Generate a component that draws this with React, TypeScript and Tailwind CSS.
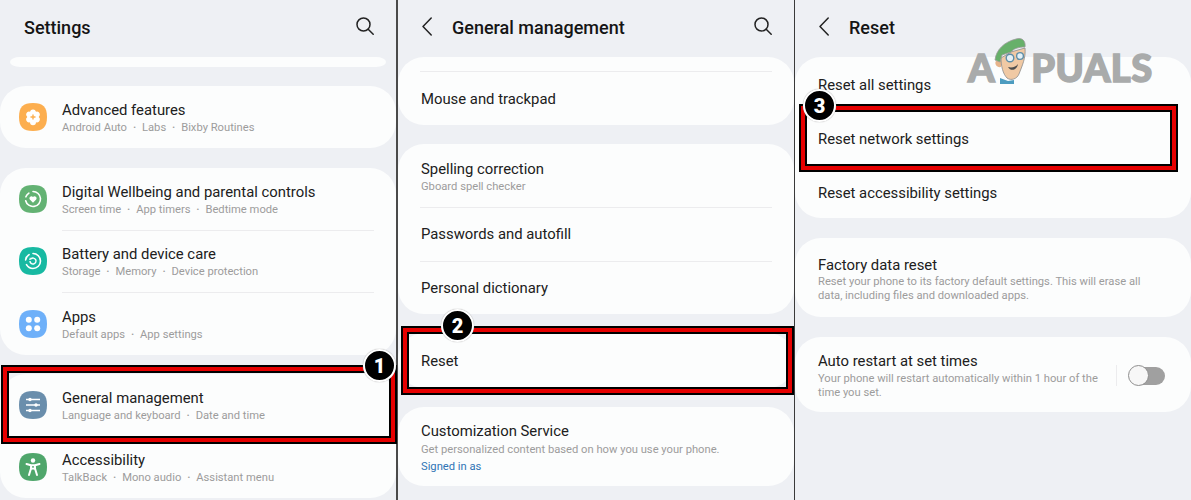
import React from "react";

const Squircle = ({ color, children }: { color: string; children?: React.ReactNode }) => (
  <svg width="28" height="28" viewBox="0 0 28 28" className="shrink-0">
    <path d="M14 0C24 0 28 4 28 14S24 28 14 28 0 24 0 14 4 0 14 0Z" fill={color} />
    {children}
  </svg>
);

const icons: Record<string, React.ReactNode> = {
  advanced: (
    <Squircle color="#fcae4f">
      <path d="M14 6.500a3 3 0 0 1 3 2.200 3 3 0 0 1 3.600 1.500 3 3 0 0 1-.9 3.800 3 3 0 0 1 .9 3.800A3 3 0 0 1 17 19.300a3 3 0 0 1-6 0 3 3 0 0 1-3.600-1.500 3 3 0 0 1 .9-3.800 3 3 0 0 1-.9-3.800A3 3 0 0 1 11 8.700a3 3 0 0 1 3-2.200Z" fill="#fff" />
      <path d="M14 11.500v5M11.500 14h5" stroke="#fcae4f" strokeWidth="1.400" />
    </Squircle>
  ),
  wellbeing: (
    <Squircle color="#63b273">
      <path d="M14 6.500a7.500 7.500 0 1 1-7.300 9.200" fill="none" stroke="#fff" strokeWidth="1.600" strokeLinecap="round" />
      <path d="M6.900 11.800a7.500 7.500 0 0 1 3-3.700" fill="none" stroke="#fff" strokeWidth="1.600" strokeLinecap="round" />
      <path d="M14 17.800l-3.200-3.200a2.100 2.100 0 0 1 3.200-2.700 2.100 2.100 0 0 1 3.200 2.700Z" fill="#fff" />
    </Squircle>
  ),
  battery: (
    <Squircle color="#17b9a2">
      <path d="M14 6.500a7.500 7.500 0 0 1 0 15 7.500 7.500 0 0 1-6.500-3.800" fill="none" stroke="#fff" strokeWidth="1.600" strokeLinecap="round" />
      <path d="M6.600 13a7.500 7.500 0 0 1 3.500-5.400" fill="none" stroke="#fff" strokeWidth="1.600" strokeLinecap="round" />
      <path d="M11 14a3 3 0 1 0 1-2.200" fill="none" stroke="#fff" strokeWidth="1.400" />
      <path d="M11 10.200l1.500 2.200-2.400.6Z" fill="#fff" />
    </Squircle>
  ),
  apps: (
    <Squircle color="#6eb0f9">
      <circle cx="9.800" cy="9.800" r="3" fill="#fff" />
      <circle cx="18.200" cy="9.800" r="3" fill="#fff" />
      <circle cx="9.800" cy="18.200" r="3" fill="#fff" />
      <circle cx="18.200" cy="18.200" r="3" fill="#fff" />
    </Squircle>
  ),
  general: (
    <Squircle color="#6a8eac">
      <path d="M7 8.500h14M7 14h14M7 19.500h14" stroke="#fff" strokeWidth="1.300" />
      <circle cx="11" cy="8.500" r="1.700" fill="#fff" />
      <circle cx="17" cy="14" r="1.700" fill="#fff" />
      <circle cx="11" cy="19.500" r="1.700" fill="#fff" />
    </Squircle>
  ),
  accessibility: (
    <Squircle color="#4fa66b">
      <circle cx="14" cy="7.500" r="2.200" fill="#fff" />
      <path d="M7.500 11l4.500 1.300v3.200L10 22M20.500 11L16 12.300v3.200L18 22M12 12.300h4M12 16l2-.6 2 .6" fill="none" stroke="#fff" strokeWidth="2" strokeLinecap="round" strokeLinejoin="round" />
    </Squircle>
  ),
};

const SearchIcon = () => (
  <svg width="18" height="18" viewBox="0 0 18 18" fill="none" stroke="#222" strokeWidth="1.500" strokeLinecap="round">
    <circle cx="7.500" cy="7.500" r="6.500" />
    <path d="M12.200 12.200L17.200 17.200" />
  </svg>
);

const BackIcon = () => (
  <svg width="10" height="19" viewBox="0 0 10 19" fill="none" stroke="#222" strokeWidth="1.500" strokeLinecap="round" strokeLinejoin="round">
    <path d="M9.200 1L1 9.500 9.200 18" />
  </svg>
);

const Sub = ({ parts }: { parts: string[] }) => (
  <div className="flex items-center text-[11.200px] leading-[15px] text-[#9c9c9c] whitespace-nowrap">
    {parts.map((p, i) => (
      <React.Fragment key={p}>
        {i > 0 && <span className="w-[15px] text-center text-[8px]">•</span>}
        <span>{p}</span>
      </React.Fragment>
    ))}
  </div>
);

const Title = ({ children }: { children: React.ReactNode }) => (
  <div className="text-[14.850px] leading-[19px] text-[#202020] whitespace-nowrap">{children}</div>
);

const IconRow = ({ icon, title, sub, h }: { icon: string; title: string; sub: string[]; h: string }) => (
  <div className={`flex items-center pl-[19px] gap-[15px] ${h}`}>
    {icons[icon]}
    <div className="pt-[2px]">
      <Title>{title}</Title>
      <Sub parts={sub} />
    </div>
  </div>
);

const Divider = ({ left }: { left: string }) => <div className={`h-px bg-[#ececee] mr-[22px] ${left}`} />;

const Header = ({ title, back, search }: { title: string; back?: boolean; search?: boolean }) => (
  <div className="h-[57px] shrink-0 flex items-center">
    {back ? (
      <div className="ml-[24px] w-[30px] flex mb-[5px]"><BackIcon /></div>
    ) : (
      <div className="w-[24px]" />
    )}
    <div className="flex-1 text-[18px] font-medium text-[#151515] pb-[3px]">{title}</div>
    {search && <div className="mr-[22px] mb-[6px]"><SearchIcon /></div>}
  </div>
);

const Box = ({ className }: { className: string }) => (
  <div className={`absolute border-2 border-black ${className}`}>
    <div className="h-full border-4 border-[#e60000]">
      <div className="h-full border-2 border-black" />
    </div>
  </div>
);

const Badge = ({ n, className }: { n: string; className: string }) => (
  <div className={`absolute w-[33px] h-[33px] rounded-full bg-black border-2 border-white shadow-[0_0_1px_#888] flex items-center justify-center text-white font-black text-[20px] leading-none ${className}`}>
    {n}
  </div>
);

const Card = ({ className, children }: { className?: string; children?: React.ReactNode }) => (
  <div className={`bg-[#fcfdfd] rounded-[26px] ${className ?? ""}`}>{children}</div>
);

const Logo = () => (
  <div className="absolute left-[968px] top-[38px] flex items-end h-[46px] text-[#a9abab] font-black text-[38px] leading-[38px] [font-family:Lato,sans-serif] tracking-[0.500px] [-webkit-text-stroke:1.500px_#a9abab]">
    <span className="mb-[-2px]">A</span>
    <svg width="34" height="46" viewBox="0 0 34 46" className="ml-[-1px]">
      <path d="M2 23c-2 3 1 7 5 6l1-7Z" fill="#e6b48b" />
      <path d="M7 20L17 14 31 10c1 10-3 18-6 26-2 5-8 7-12 4C9 36 7 28 7 20Z" fill="#f0c9a4" stroke="#8b8b8b" strokeWidth=".8" />
      <path d="M1 22C2 12 10 4 22 1c6-2 10 2 9 8-7 0-12 2-14 5l-9 3-2 7Z" fill="#67b06a" stroke="#9a9a9a" strokeWidth=".8" />
      <circle cx="16" cy="20" r="3.800" fill="#e4f1f7" stroke="#5d8ea8" strokeWidth="1.400" />
      <circle cx="26" cy="18" r="3.400" fill="#e4f1f7" stroke="#5d8ea8" strokeWidth="1.400" />
      <path d="M14 29c4 1 8 0 10-3-1 6-7 8-10 3Z" fill="#4d4d4d" />
      <path d="M6 40l8 3 6-1v4H6Z" fill="#4d9cc0" />
    </svg>
    <span className="mb-[-2px] ml-[3px]">PUALS</span>
  </div>
);

export default function App() {
  return (
    <div className="relative w-[1191px] h-[500px] overflow-hidden flex bg-[#eef0f4] [font-family:Roboto,sans-serif]">
      {/* Panel 1 */}
      <div className="w-[396px] shrink-0 flex flex-col">
        <Header title="Settings" search />
        <div className="h-[10px] mx-[10px] bg-[#fcfdfd] rounded-[12px/6px] shrink-0" />
        <Card className="mt-[19px]">
          <IconRow icon="advanced" title="Advanced features" sub={["Android Auto", "Labs", "Bixby Routines"]} h="h-[62px]" />
        </Card>
        <Card className="mt-[20px]">
          <IconRow icon="wellbeing" title="Digital Wellbeing and parental controls" sub={["Screen time", "App timers", "Bedtime mode"]} h="h-[62px]" />
          <Divider left="ml-[62px]" />
          <IconRow icon="battery" title="Battery and device care" sub={["Storage", "Memory", "Device protection"]} h="h-[61px] pb-[2px]" />
          <Divider left="ml-[62px]" />
          <IconRow icon="apps" title="Apps" sub={["Default apps", "App settings"]} h="h-[62px]" />
        </Card>
        <Card className="mt-[19px]">
          <IconRow icon="general" title="General management" sub={["Language and keyboard", "Date and time"]} h="h-[62px]" />
          <Divider left="ml-[62px]" />
          <IconRow icon="accessibility" title="Accessibility" sub={["TalkBack", "Mono audio", "Assistant menu"]} h="h-[61px] pb-[2px]" />
        </Card>
      </div>
      <div className="w-[2px] shrink-0 bg-[#4a4a4a]" />

      {/* Panel 2 */}
      <div className="w-[396px] shrink-0 flex flex-col">
        <Header title="General management" back search />
        <Card className="h-[68px] pt-[14px]">
          <Divider left="ml-[22px]" />
          <div className="h-[53px] flex items-center pl-[23px] pt-[2px]"><Title>Mouse and trackpad</Title></div>
        </Card>
        <Card className="mt-[19px]">
          <div className="h-[63px] pl-[23px] pt-[16px]">
            <Title>Spelling correction</Title>
            <Sub parts={["Gboard spell checker"]} />
          </div>
          <Divider left="ml-[22px]" />
          <div className="h-[53px] flex items-center pl-[23px]"><Title>Passwords and autofill</Title></div>
          <Divider left="ml-[22px]" />
          <div className="h-[52px] flex items-center pl-[23px]"><Title>Personal dictionary</Title></div>
        </Card>
        <Card className="mt-[19px] h-[55px] flex items-center pl-[23px] pt-[2px]"><Title>Reset</Title></Card>
        <Card className="mt-[19px] h-[79px] pl-[23px] pt-[15px]">
          <Title>Customization Service</Title>
          <div className="mt-px"><Sub parts={["Get personalized content based on how you use your phone."]} /></div>
          <div className="text-[11.200px] leading-[15px] mt-[2px] text-[#2f74b5]">Signed in as</div>
        </Card>
      </div>
      <div className="w-px shrink-0 bg-[#3a3a3a]" />

      {/* Panel 3 */}
      <div className="flex-1 flex flex-col">
        <Header title="Reset" back />
        <Card className="h-[161px] pt-px">
          {["Reset all settings", "Reset network settings", "Reset accessibility settings"].map((t) => (
            <div key={t} className="h-[54px] flex items-center pl-[23px]"><Title>{t}</Title></div>
          ))}
        </Card>
        <Card className="mt-[20px] h-[79px] pl-[23px] pt-[18px]">
          <Title>Factory data reset</Title>
          <div className="text-[11.200px] leading-[13.500px] text-[#9c9c9c] w-[335px]">
            Reset your phone to its factory default settings. This will erase all data, including files and downloaded apps.
          </div>
        </Card>
        <Card className="mt-[20px] h-[75px] pl-[23px] pt-[15px] flex">
          <div className="w-[298px]">
            <Title>Auto restart at set times</Title>
            <div className="mt-px text-[11.200px] leading-[13.500px] text-[#9c9c9c] w-[290px]">
              Your phone will restart automatically within 1 hour of the time you set.
            </div>
          </div>
          <div className="w-px h-[21px] bg-[#ececee] mt-[13px]" />
          <div className="relative ml-[11px] mt-[13px] w-[37px] h-[21px]">
            <div className="absolute left-[1px] top-[2px] w-[36px] h-[18px] rounded-full bg-[#a0a0a0]" />
            <div className="absolute left-0 top-0 w-[21px] h-[21px] rounded-full bg-[#f7f7f7] border border-[#8f8f8f]" />
          </div>
        </Card>
      </div>

      {/* Annotations */}
      <Box className="left-[1px] top-[365px] w-[396px] h-[79px]" />
      <Box className="left-[401px] top-[326px] w-[393px] h-[69px]" />
      <Box className="left-[799px] top-[104px] w-[379px] h-[68px]" />
      <Badge n="1" className="left-[363px] top-[349px]" />
      <Badge n="2" className="left-[441px] top-[309px]" />
      <Badge n="3" className="left-[803px] top-[89px]" />
      <Logo />
    </div>
  );
}
